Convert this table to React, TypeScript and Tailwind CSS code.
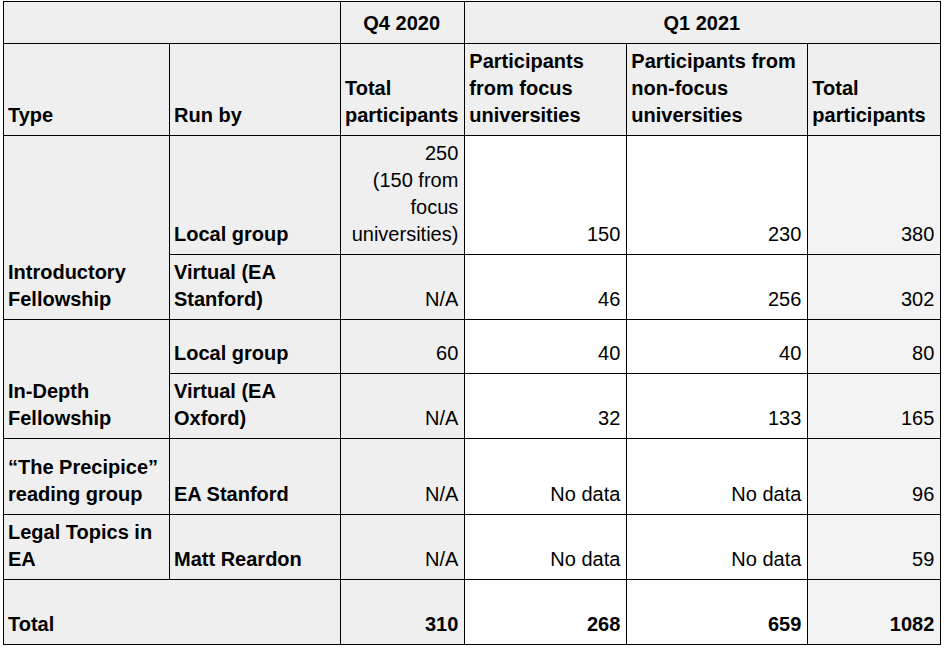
const cell = 'border border-black pl-[4px] pr-[6px] pb-[6px] align-bottom'
const gray = 'bg-[#efefef]'
const grayCol = 'bg-[#f3f3f3]'

type Row = {
  type?: string[]
  typeSpan?: number
  runBy: string[]
  q4: string[]
  focus: string
  nonFocus: string
  total: string
  h: string
}

const rows: Row[] = [
  {
    type: ['Introductory', 'Fellowship'],
    typeSpan: 2,
    runBy: ['Local group'],
    q4: ['250', '(150 from', 'focus', 'universities)'],
    focus: '150',
    nonFocus: '230',
    total: '380',
    h: 'h-[119px]',
  },
  {
    runBy: ['Virtual (EA', 'Stanford)'],
    q4: ['N/A'],
    focus: '46',
    nonFocus: '256',
    total: '302',
    h: 'h-[65px]',
  },
  {
    type: ['In-Depth', 'Fellowship'],
    typeSpan: 2,
    runBy: ['Local group'],
    q4: ['60'],
    focus: '40',
    nonFocus: '40',
    total: '80',
    h: 'h-[54px]',
  },
  {
    runBy: ['Virtual (EA', 'Oxford)'],
    q4: ['N/A'],
    focus: '32',
    nonFocus: '133',
    total: '165',
    h: 'h-[65px]',
  },
  {
    type: ['“The Precipice”', 'reading group'],
    typeSpan: 1,
    runBy: ['EA Stanford'],
    q4: ['N/A'],
    focus: 'No data',
    nonFocus: 'No data',
    total: '96',
    h: 'h-[76px]',
  },
  {
    type: ['Legal Topics in', 'EA'],
    typeSpan: 1,
    runBy: ['Matt Reardon'],
    q4: ['N/A'],
    focus: 'No data',
    nonFocus: 'No data',
    total: '59',
    h: 'h-[65px]',
  },
]

function Lines({ lines }: { lines: string[] }) {
  return (
    <>
      {lines.map((l, i) => (
        <div key={i} className="whitespace-nowrap">
          {l}
        </div>
      ))}
    </>
  )
}

export default function App() {
  return (
    <div
      className="bg-white pl-[3px] pt-[1px] text-black"
      style={{ fontFamily: '"Liberation Sans", Arial, sans-serif' }}
    >
      <table className="table-fixed border-collapse text-[20px] leading-[27px]">
        <colgroup>
          <col className="w-[166px]" />
          <col className="w-[171px]" />
          <col className="w-[124px]" />
          <col className="w-[162px]" />
          <col className="w-[181px]" />
          <col className="w-[133px]" />
        </colgroup>
        <thead>
          <tr className="h-[42px] font-bold">
            <th colSpan={2} className={`${cell} ${gray}`} />
            <th className={`${cell} ${gray} text-center`}>Q4 2020</th>
            <th colSpan={3} className={`${cell} ${gray} text-center`}>
              Q1 2021
            </th>
          </tr>
          <tr className="h-[92px] text-left font-bold">
            <th className={`${cell} ${gray}`}>Type</th>
            <th className={`${cell} ${gray}`}>Run by</th>
            <th className={`${cell} ${gray}`}>
              <Lines lines={['Total', 'participants']} />
            </th>
            <th className={`${cell} ${gray}`}>
              <Lines lines={['Participants', 'from focus', 'universities']} />
            </th>
            <th className={`${cell} ${gray}`}>
              <Lines lines={['Participants from', 'non-focus', 'universities']} />
            </th>
            <th className={`${cell} ${gray}`}>
              <Lines lines={['Total', 'participants']} />
            </th>
          </tr>
        </thead>
        <tbody>
          {rows.map((r, i) => (
            <tr key={i} className={r.h}>
              {r.type ? (
                <td rowSpan={r.typeSpan} className={`${cell} ${gray} font-bold`}>
                  <Lines lines={r.type} />
                </td>
              ) : null}
              <td className={`${cell} ${gray} font-bold`}>
                <Lines lines={r.runBy} />
              </td>
              <td className={`${cell} ${gray} text-right`}>
                <Lines lines={r.q4} />
              </td>
              <td className={`${cell} bg-white text-right`}>{r.focus}</td>
              <td className={`${cell} bg-white text-right`}>{r.nonFocus}</td>
              <td className={`${cell} ${grayCol} text-right`}>{r.total}</td>
            </tr>
          ))}
          <tr className="h-[65px] font-bold">
            <td colSpan={2} className={`${cell} ${gray}`}>
              Total
            </td>
            <td className={`${cell} ${gray} text-right`}>310</td>
            <td className={`${cell} bg-white text-right`}>268</td>
            <td className={`${cell} bg-white text-right`}>659</td>
            <td className={`${cell} ${grayCol} text-right`}>1082</td>
          </tr>
        </tbody>
      </table>
    </div>
  )
}
